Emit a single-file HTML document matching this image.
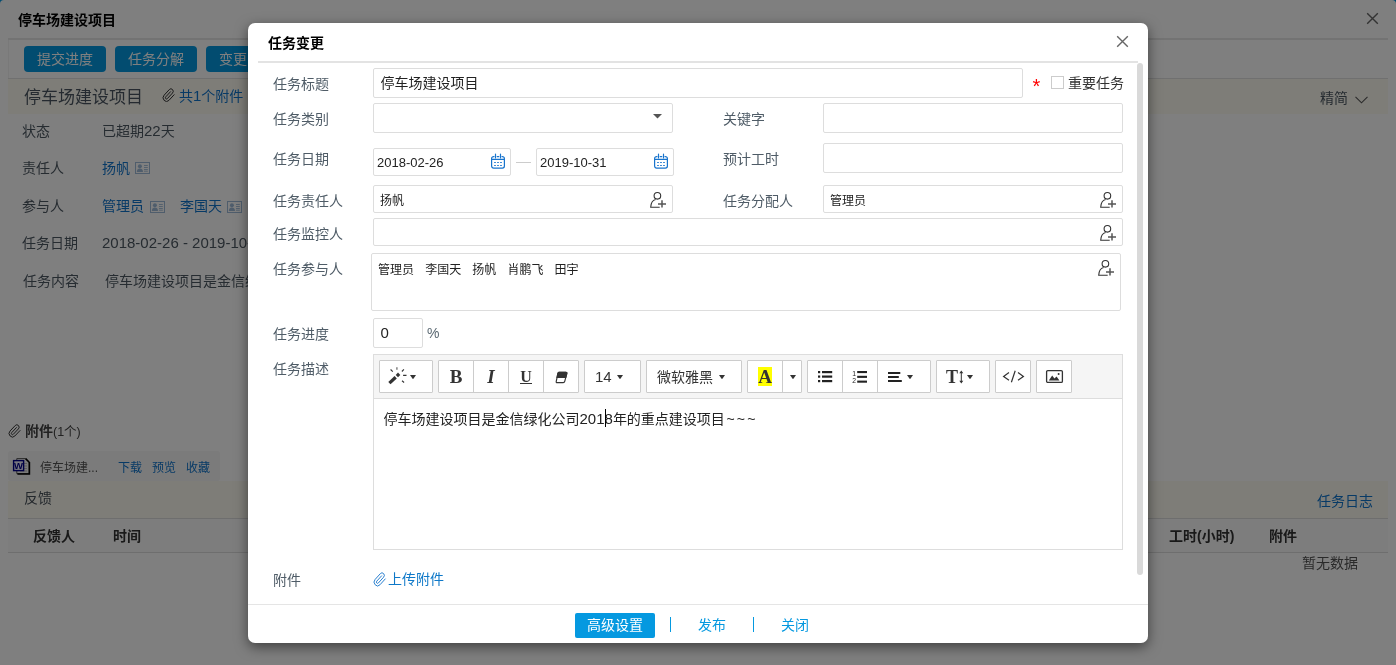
<!DOCTYPE html>
<html lang="zh-CN">
<head>
<meta charset="utf-8">
<title>任务变更</title>
<style>
*{box-sizing:border-box;margin:0;padding:0}
html,body{width:1396px;height:665px;overflow:hidden}
body{background:#0599e0;font-family:"Liberation Sans","Noto Sans CJK SC",sans-serif;font-size:14px;color:#333;position:relative}
.abs{position:absolute}
#page{will-change:transform;position:absolute;left:0;top:0;width:1396px;height:665px;background:#fff;border-radius:4px 4px 0 0;overflow:hidden}
#page .t{position:absolute;white-space:nowrap;line-height:20px}
.pbtn{position:absolute;top:46px;height:26px;width:82px;background:#0599e0;color:#fff;border-radius:4px;text-align:center;line-height:27px;font-size:14px}
.lnk{color:#0f74cc}
.lbl{color:#4d5862}
#mask{position:absolute;left:0;top:0;width:1396px;height:665px;background:rgba(0,0,0,.5)}
#dlg{will-change:transform;position:absolute;left:248px;top:23px;width:900px;height:620px;background:#fff;border-radius:7px;box-shadow:0 4px 13px rgba(0,0,0,.5)}
#dlg .t{position:absolute;white-space:nowrap;line-height:20px}
#dlg .fl{position:absolute;white-space:nowrap;line-height:20px;color:#4f5c67;font-size:14px;left:25px}
.inp{position:absolute;border:1px solid #ddd;border-radius:2px;background:#fff;height:30px}
.inp span{position:absolute;left:6.4px;top:4px;line-height:20px;white-space:nowrap;color:#222}
.tb{position:absolute;top:7px;height:32px;border:1px solid #ddd;background:#fff;border-radius:2px}
.tbb{position:absolute;top:337px;height:33px;border:1px solid #ccc;background:#fff;border-radius:1px}
.d{font-size:15px}
</style>
</head>
<body>
<div id="page">
  <div class="t" style="left:18px;top:10px;font-weight:bold;color:#000">停车场建设项目</div>
  <svg class="abs" style="left:1366px;top:12px" width="13" height="13" viewBox="0 0 13 13"><path d="M1.2 1.2L11.8 11.8M11.8 1.2L1.2 11.8" stroke="#666" stroke-width="1.4" fill="none"/></svg>
  <div class="abs" style="left:8px;top:38px;width:1380px;height:2px;background:#e6e6e6"></div>
  <div class="abs" style="left:8px;top:40px;width:1px;height:38px;background:#f2f2f2"></div>
  <div class="pbtn" style="left:24px">提交进度</div>
  <div class="pbtn" style="left:115px">任务分解</div>
  <div class="pbtn" style="left:206px;width:54px">变更</div>
  <div class="abs" style="left:8px;top:78px;width:1380px;height:1px;background:#e0e0e0"></div>
  <div class="abs" style="left:8px;top:79px;width:1380px;height:35px;background:#fcfaf1"></div>
  <div class="t" style="left:24px;top:85.5px;font-size:17px;line-height:24px;color:#4a5560">停车场建设项目</div>
  <div class="t lnk" style="left:179px;top:86px">共<span class="d">1</span>个附件</div>
  <div class="t lbl" style="left:1320px;top:88px">精简</div>

<svg class="abs" style="left:162.27px;top:87.55px" width="13.58" height="14.67" viewBox="0 0 24 24" preserveAspectRatio="none" fill="none" stroke="#333" stroke-width="1.0" vector-effect="non-scaling-stroke" stroke-linecap="round"><path vector-effect="non-scaling-stroke" d="M21.44 11.05l-9.19 9.19a6 6 0 0 1-8.49-8.49l9.19-9.19a4 4 0 0 1 5.66 5.66l-9.2 9.19a2 2 0 0 1-2.83-2.83l8.49-8.48"/></svg><svg class="abs" style="left:7.58px;top:423.68px" width="13.46" height="14.21" viewBox="0 0 24 24" preserveAspectRatio="none" fill="none" stroke="#333" stroke-width="1.0" vector-effect="non-scaling-stroke" stroke-linecap="round"><path vector-effect="non-scaling-stroke" d="M21.44 11.05l-9.19 9.19a6 6 0 0 1-8.49-8.49l9.19-9.19a4 4 0 0 1 5.66 5.66l-9.2 9.19a2 2 0 0 1-2.83-2.83l8.49-8.48"/></svg><svg class="abs" style="left:135px;top:162px" width="15" height="12" viewBox="0 0 15 12"><rect x=".5" y=".5" width="14" height="11" fill="none" stroke="#9fbbd8"/><circle cx="4.9" cy="4.2" r="2" fill="#9fbbd8"/><path d="M1.8 10C1.8 7.4 3.2 6.4 4.9 6.4S8 7.4 8 10Z" fill="#9fbbd8"/><path d="M9 3.5H12.8M9 5.5H12.8M9 7.5H12.8M9 9.2H12.8" stroke="#9fbbd8" stroke-width=".9"/></svg><svg class="abs" style="left:150px;top:201px" width="15" height="12" viewBox="0 0 15 12"><rect x=".5" y=".5" width="14" height="11" fill="none" stroke="#9fbbd8"/><circle cx="4.9" cy="4.2" r="2" fill="#9fbbd8"/><path d="M1.8 10C1.8 7.4 3.2 6.4 4.9 6.4S8 7.4 8 10Z" fill="#9fbbd8"/><path d="M9 3.5H12.8M9 5.5H12.8M9 7.5H12.8M9 9.2H12.8" stroke="#9fbbd8" stroke-width=".9"/></svg><svg class="abs" style="left:227px;top:201px" width="15" height="12" viewBox="0 0 15 12"><rect x=".5" y=".5" width="14" height="11" fill="none" stroke="#9fbbd8"/><circle cx="4.9" cy="4.2" r="2" fill="#9fbbd8"/><path d="M1.8 10C1.8 7.4 3.2 6.4 4.9 6.4S8 7.4 8 10Z" fill="#9fbbd8"/><path d="M9 3.5H12.8M9 5.5H12.8M9 7.5H12.8M9 9.2H12.8" stroke="#9fbbd8" stroke-width=".9"/></svg><svg class="abs" style="left:1355px;top:96px" width="13" height="8" viewBox="0 0 13 8"><path d="M.5 .8L6.5 6.8L12.5 .8" fill="none" stroke="#555" stroke-width="1.1"/></svg>
  <div class="t lbl" style="left:22px;top:121px">状态</div>
  <div class="t lbl" style="left:102px;top:121px">已超期<span class="d">22</span>天</div>
  <div class="t lbl" style="left:22px;top:158px">责任人</div>
  <div class="t lnk" style="left:102px;top:158px">扬帆</div>
  <div class="t lbl" style="left:22px;top:196px">参与人</div>
  <div class="t lnk" style="left:102px;top:196px">管理员</div>
  <div class="t lnk" style="left:180px;top:196px">李国天</div>
  <div class="t lbl" style="left:22px;top:233px">任务日期</div>
  <div class="t lbl" style="left:102px;top:233px;font-size:15px">2018-02-26 - 2019-10-31</div>
  <div class="t lbl" style="left:23px;top:271px">任务内容</div>
  <div class="t lbl" style="left:105px;top:271px">停车场建设项目是金信绿化公司<span class="d">2018</span>年的重点建设项目~~~</div>

  <div class="t" style="left:25px;top:421px;font-size:12.5px;color:#444"><b style="font-size:14px">附件</b>(1个)</div>
  <div class="abs" style="left:8px;top:451px;width:212px;height:30px;background:#f6f6f6;border-radius:3px"></div>
  <svg class="abs" style="left:12px;top:457px" width="20" height="20" viewBox="0 0 20 20"><path d="M4.8 1.6H13.6L17.2 5.2V16.6H4.8Z" fill="#f4f4f4" stroke="#555" stroke-width="1"/><path d="M13.6 1.6L17.2 5.2M17.4 5V17H5.4" fill="none" stroke="#000" stroke-width="1.6"/><path d="M12 6.5H15M12 9H15M12 11.5H15M8 14H15" stroke="#bbb" stroke-width="1" fill="none"/><rect x="1.6" y="3.6" width="10" height="10" fill="#f0f0ff" stroke="#00008b" stroke-width="1.4"/><text x="6.6" y="12" style="font-family:'Liberation Sans',sans-serif" font-size="9.5" font-weight="bold" fill="#00008b" text-anchor="middle">W</text></svg>
  <div class="t" style="left:40px;top:457.5px;font-size:12px;color:#555">停车场建...</div>
  <div class="t lnk" style="left:118px;top:457.5px;font-size:12px">下载</div>
  <div class="t lnk" style="left:152px;top:457.5px;font-size:12px">预览</div>
  <div class="t lnk" style="left:186px;top:457.5px;font-size:12px">收藏</div>
  <div class="abs" style="left:8px;top:481px;width:1380px;height:37px;background:#fcfaf1"></div>
  <div class="t" style="left:24px;top:488px;color:#475058">反馈</div>
  <div class="t lnk" style="left:1317px;top:491px">任务日志</div>
  <div class="abs" style="left:8px;top:518px;width:1380px;height:1px;background:#ddd"></div>
  <div class="abs" style="left:8px;top:519px;width:1380px;height:33px;background:#fafafa"></div>
  <div class="t" style="left:33px;top:526px;font-weight:bold;color:#333">反馈人</div>
  <div class="t" style="left:113px;top:526px;font-weight:bold;color:#333">时间</div>
  <div class="t" style="left:1169px;top:526px;font-weight:bold;color:#333">工时(小时)</div>
  <div class="t" style="left:1269px;top:526px;font-weight:bold;color:#333">附件</div>
  <div class="abs" style="left:8px;top:552px;width:1380px;height:1px;background:#ddd"></div>
  <div class="t" style="left:1302px;top:553px;color:#555">暂无数据</div>
</div>
<div id="mask"></div>

<div id="dlg">
  <div class="t" style="left:20px;top:10px;font-weight:bold;color:#000">任务变更</div>
  <svg class="abs" style="left:868px;top:12px" width="13" height="13" viewBox="0 0 13 13"><path d="M1.2 1.2L11.8 11.8M11.8 1.2L1.2 11.8" stroke="#666" stroke-width="1.4" fill="none"/></svg>
  <div class="abs" style="left:10px;top:38px;width:880px;height:2px;background:#e3e3e3"></div>
  <div class="abs" style="left:889px;top:40px;width:6px;height:512px;background:#d9d9d9;border-radius:3px"></div>

  <div class="fl" style="top:51px">任务标题</div>
  <div class="inp" style="left:125px;top:45px;width:650px"><span>停车场建设项目</span></div>
  <div class="t" style="left:784.5px;top:52.5px;color:#f00;font-size:20px">*</div>
  <div class="abs" style="left:803px;top:53px;width:13px;height:13px;border:1px solid #ccc;background:#fff"></div>
  <div class="t" style="left:820px;top:50px;color:#333">重要任务</div>

  <div class="fl" style="top:86px">任务类别</div>
  <div class="inp" style="left:125px;top:80px;width:300px"></div>
  <div class="fl" style="left:475px;top:86px">关键字</div>
  <div class="inp" style="left:575px;top:80px;width:300px"></div>

  <div class="fl" style="top:126px">任务日期</div>
  <div class="inp" style="left:125px;top:125px;width:138px;height:28px"><span style="left:3px;font-size:13px">2018-02-26</span></div>
  <div class="abs" style="left:268px;top:139px;width:15px;height:1px;background:#ccc"></div>
  <div class="inp" style="left:288px;top:125px;width:138px;height:28px"><span style="left:3px;font-size:13px">2019-10-31</span></div>
  <div class="fl" style="left:475px;top:126px">预计工时</div>
  <div class="inp" style="left:575px;top:120px;width:300px"></div>

  <div class="fl" style="top:168px">任务责任人</div>
  <div class="inp" style="left:125px;top:162px;width:300px;height:28px"><span style="left:6px;top:5px;font-size:12px">扬帆</span></div>
  <div class="fl" style="left:475px;top:168px">任务分配人</div>
  <div class="inp" style="left:575px;top:162px;width:300px;height:28px"><span style="left:6px;top:5px;font-size:12px">管理员</span></div>

  <div class="fl" style="top:201px">任务监控人</div>
  <div class="inp" style="left:125px;top:195px;width:750px;height:28px"></div>

  <div class="fl" style="top:236px">任务参与人</div>
  <div class="inp" style="left:123px;top:230px;width:750px;height:58px"><span style="left:6px;top:5.8px;font-size:12px;word-spacing:7.8px">管理员 李国天 扬帆 肖鹏飞 田宇</span></div>

  <div class="fl" style="top:301px">任务进度</div>
  <div class="inp" style="left:125px;top:295px;width:50px"><span style="font-size:15px">0</span></div>
  <div class="t" style="left:179px;top:300px;color:#5a6872">%</div>

  <div class="fl" style="top:336px">任务描述</div>
  <div class="abs" id="ed" style="left:125px;top:331px;width:750px;height:196px;border:1px solid #ddd;background:#fff">
    <div class="abs" style="left:0;top:0;width:748px;height:44px;background:#f5f5f5;border-bottom:1px solid #ddd"></div>
    <div class="t" style="left:9.5px;top:53.5px;color:#222">停车场建设项目是金信绿化公司<span class="d">2018</span>年的重点建设项目<span style="letter-spacing:2.2px;margin-left:1.5px">~~~</span></div>
  </div>

<svg class="abs" style="left:405px;top:91px" width="9" height="4.5" viewBox="0 0 9 4.5"><path d="M0 0H9L4.5 4.5Z" fill="#555"/></svg><svg class="abs" style="left:242px;top:130px" width="16" height="16" viewBox="0 0 16 16" fill="none" stroke="#1874cd" stroke-width="1.2" stroke-linecap="round"><path d="M4 3.6H3.6A2 2 0 0 0 1.6 5.6V13.1A2 2 0 0 0 3.6 15.1H12.4A2 2 0 0 0 14.4 13.1V5.6A2 2 0 0 0 12.4 3.6H12M7.2 3.6H8.8M1.6 6.4H14.4M5.5 1.2V4.8M10.5 1.2V4.8"/><path d="M4.2 9.5H5.8M7.2 9.5H8.8M10.2 9.5H11.8M4.2 12.5H5.8M7.2 12.5H8.8M10.2 12.5H11.8" stroke-linecap="butt"/></svg><svg class="abs" style="left:405px;top:130px" width="16" height="16" viewBox="0 0 16 16" fill="none" stroke="#1874cd" stroke-width="1.2" stroke-linecap="round"><path d="M4 3.6H3.6A2 2 0 0 0 1.6 5.6V13.1A2 2 0 0 0 3.6 15.1H12.4A2 2 0 0 0 14.4 13.1V5.6A2 2 0 0 0 12.4 3.6H12M7.2 3.6H8.8M1.6 6.4H14.4M5.5 1.2V4.8M10.5 1.2V4.8"/><path d="M4.2 9.5H5.8M7.2 9.5H8.8M10.2 9.5H11.8M4.2 12.5H5.8M7.2 12.5H8.8M10.2 12.5H11.8" stroke-linecap="butt"/></svg><svg class="abs" style="left:401px;top:168px" width="18" height="18" viewBox="0 0 18 18" fill="none"><circle cx="8.4" cy="4.8" r="3.3" stroke="#333" stroke-width="1.1"/><path d="M10.7 16.3H1.7C1.9 12 3.6 9.2 6.6 8.5" stroke="#333" stroke-width="1.1"/><path d="M9 13H17M13 9.3V16.6" stroke="#555" stroke-width="1.5"/></svg><svg class="abs" style="left:851px;top:168px" width="18" height="18" viewBox="0 0 18 18" fill="none"><circle cx="8.4" cy="4.8" r="3.3" stroke="#333" stroke-width="1.1"/><path d="M10.7 16.3H1.7C1.9 12 3.6 9.2 6.6 8.5" stroke="#333" stroke-width="1.1"/><path d="M9 13H17M13 9.3V16.6" stroke="#555" stroke-width="1.5"/></svg><svg class="abs" style="left:851px;top:201px" width="18" height="18" viewBox="0 0 18 18" fill="none"><circle cx="8.4" cy="4.8" r="3.3" stroke="#333" stroke-width="1.1"/><path d="M10.7 16.3H1.7C1.9 12 3.6 9.2 6.6 8.5" stroke="#333" stroke-width="1.1"/><path d="M9 13H17M13 9.3V16.6" stroke="#555" stroke-width="1.5"/></svg><svg class="abs" style="left:849px;top:236px" width="18" height="18" viewBox="0 0 18 18" fill="none"><circle cx="8.4" cy="4.8" r="3.3" stroke="#333" stroke-width="1.1"/><path d="M10.7 16.3H1.7C1.9 12 3.6 9.2 6.6 8.5" stroke="#333" stroke-width="1.1"/><path d="M9 13H17M13 9.3V16.6" stroke="#555" stroke-width="1.5"/></svg><svg class="abs" style="left:125.26px;top:548.52px" width="13.70" height="15.14" viewBox="0 0 24 24" preserveAspectRatio="none" fill="none" stroke="#2a80d0" stroke-width="1.0" vector-effect="non-scaling-stroke" stroke-linecap="round"><path vector-effect="non-scaling-stroke" d="M21.44 11.05l-9.19 9.19a6 6 0 0 1-8.49-8.49l9.19-9.19a4 4 0 0 1 5.66 5.66l-9.2 9.19a2 2 0 0 1-2.83-2.83l8.49-8.48"/></svg>
  <!-- editor toolbar -->
    <div class="tbb" style="left:131px;width:54px"></div>
    <div class="tbb" style="left:190px;width:141px"></div>
    <div class="tbb" style="left:336px;width:57px"></div>
    <div class="tbb" style="left:398px;width:96px"></div>
    <div class="tbb" style="left:499px;width:55px"></div>
    <div class="tbb" style="left:559px;width:124px"></div>
    <div class="tbb" style="left:688px;width:54px"></div>
    <div class="tbb" style="left:747px;width:36px"></div>
    <div class="tbb" style="left:788px;width:36px"></div>
    <div class="abs" style="left:225px;top:337px;width:1px;height:33px;background:#ccc"></div>
    <div class="abs" style="left:260px;top:337px;width:1px;height:33px;background:#ccc"></div>
    <div class="abs" style="left:295px;top:337px;width:1px;height:33px;background:#ccc"></div>
    <div class="abs" style="left:534px;top:337px;width:1px;height:33px;background:#ccc"></div>
    <div class="abs" style="left:594px;top:337px;width:1px;height:33px;background:#ccc"></div>
    <div class="abs" style="left:629px;top:337px;width:1px;height:33px;background:#ccc"></div>
    <svg class="abs" style="left:138px;top:343px" width="22" height="22" viewBox="0 0 22 22"><path d="M3.4 17.1L9.7 11.3" stroke="#333" stroke-width="3.3" fill="none"/><path d="M12 6.6L14.3 8.9L12 11.2L9.7 8.9Z" fill="#333"/><path d="M10.9 1.3V3.7" stroke="#777" stroke-width="1.4" fill="none"/><path d="M4.6 3.5L6.8 5.6M15.9 5.5L17.9 3.4M17.1 9.4H20.5M16 14.8L18.1 16.5" stroke="#333" stroke-width="1.1" fill="none"/></svg>
    <svg class="abs" style="left:161.7px;top:351.5px" width="6" height="4.3" viewBox="0 0 6 4.3"><path d="M0 0H6L3.0 4.3Z" fill="#333"/></svg>
    <svg class="abs" style="left:187.7px;top:336.3px;overflow:visible" width="40" height="30"><text x="20" y="24" text-anchor="middle" font-family="Liberation Serif,serif" font-size="19" fill="#333" font-weight="bold">B</text></svg>
    <svg class="abs" style="left:222.8px;top:336.3px;overflow:visible" width="40" height="30"><text x="20" y="24" text-anchor="middle" font-family="Liberation Serif,serif" font-size="19" fill="#333" font-weight="bold" font-style="italic">I</text></svg>
    <svg class="abs" style="left:258.0px;top:334.6px;overflow:visible" width="40" height="30"><text x="20" y="24" text-anchor="middle" font-family="Liberation Serif,serif" font-size="16" fill="#333" font-weight="bold">U</text></svg>
    <div class="abs" style="left:272px;top:360px;width:12px;height:1px;background:#333"></div>
    <svg class="abs" style="left:306.79999999999995px;top:347.8px" width="13.4" height="13.4" viewBox="0 0 15 15"><path d="M4.3 1.5H12.2Q13.6 1.5 13.2 2.9L10.9 11.6Q10.6 13 9.2 13H2.4Q1 13 1.4 11.6L3.2 2.9Q3.5 1.5 4.3 1.5Z" fill="#fff" stroke="#333" stroke-width="1.3"/><path d="M4.3 1.5H12.2Q13.6 1.5 13.2 2.9L12.1 7.2H2.3L3.2 2.9Q3.5 1.5 4.3 1.5Z" fill="#333" stroke="#333" stroke-width="1.3"/></svg>
    <div class="t" style="left:347px;top:343.5px;font-size:15px;color:#333">14</div>
    <svg class="abs" style="left:369.29999999999995px;top:351.6px" width="6" height="4.3" viewBox="0 0 6 4.3"><path d="M0 0H6L3.0 4.3Z" fill="#333"/></svg>
    <div class="t" style="left:409px;top:343.5px;font-size:14px;color:#333">微软雅黑</div>
    <svg class="abs" style="left:470.6px;top:351.5px" width="6" height="4.3" viewBox="0 0 6 4.3"><path d="M0 0H6L3.0 4.3Z" fill="#333"/></svg>
    <div class="abs" style="left:510px;top:344px;width:14px;height:19px;background:#ff0"></div>
    <svg class="abs" style="left:497.2px;top:335.8px;overflow:visible" width="40" height="30"><text x="20" y="24" text-anchor="middle" font-family="Liberation Serif,serif" font-size="19" fill="#333" font-weight="bold">A</text></svg>
    <svg class="abs" style="left:541.6px;top:351.5px" width="6" height="4.3" viewBox="0 0 6 4.3"><path d="M0 0H6L3.0 4.3Z" fill="#333"/></svg>
    <svg class="abs" style="left:569px;top:347px" width="16" height="13" viewBox="0 0 16 13" fill="#222"><rect x="1" y="1" width="2.2" height="2.2"/><rect x="5" y="1" width="10.2" height="2.2"/><rect x="1" y="5.5" width="2.2" height="2.2"/><rect x="5" y="5.5" width="10.2" height="2.2"/><rect x="1" y="10" width="2.2" height="2.2"/><rect x="5" y="10" width="10.2" height="2.2"/></svg>
    <svg class="abs" style="left:603px;top:346px" width="17" height="15" viewBox="0 0 17 15" fill="#222"><rect x="6.2" y="2" width="9.8" height="2.1"/><rect x="6.2" y="6.8" width="9.8" height="2.1"/><rect x="6.2" y="11.6" width="9.8" height="2.1"/><text x="1.2" y="6.6" style="font-family:'Liberation Sans',sans-serif" font-size="6.8">1</text><text x="1.2" y="13.8" style="font-family:'Liberation Sans',sans-serif" font-size="6.8">2</text></svg>
    <svg class="abs" style="left:639px;top:348px" width="16" height="12" viewBox="0 0 16 12" fill="#222"><rect x="1" y="1" width="12.3" height="2"/><rect x="1" y="5" width="10.8" height="2"/><rect x="1" y="9" width="13.8" height="2"/></svg>
    <svg class="abs" style="left:659.3px;top:351.6px" width="6" height="4.3" viewBox="0 0 6 4.3"><path d="M0 0H6L3.0 4.3Z" fill="#333"/></svg>
    <svg class="abs" style="left:683.6px;top:335.9px;overflow:visible" width="40" height="30"><text x="20" y="24" text-anchor="middle" font-family="Liberation Serif,serif" font-size="18" fill="#333" font-weight="bold">T</text></svg>
    <svg class="abs" style="left:710px;top:347px" width="7" height="14" viewBox="0 0 7 14"><path d="M3.3 2V12" stroke="#333" stroke-width="1" fill="none"/><path d="M3.3 .6L5.3 3.2H1.3ZM3.3 13.4L5.3 10.8H1.3Z" fill="#333"/></svg>
    <svg class="abs" style="left:719px;top:351.5px" width="6" height="4.3" viewBox="0 0 6 4.3"><path d="M0 0H6L3.0 4.3Z" fill="#333"/></svg>
    <svg class="abs" style="left:754px;top:347px" width="23" height="13" viewBox="0 0 23 13" fill="none" stroke="#333" stroke-width="1.2"><path d="M7 2.6L1.6 6.4L7 10.2M16 2.6L21.4 6.4L16 10.2M13.2 .8L9.4 12.2"/></svg>
    <svg class="abs" style="left:797px;top:346px" width="19" height="15" viewBox="0 0 19 15"><rect x="1.6" y="1.6" width="15.8" height="11.8" rx="1.2" fill="#fff" stroke="#333" stroke-width="1.3"/><path d="M3.8 11.4L7.2 6.6L9.4 9.4L11.6 7.6L14.4 11.4Z" fill="#333"/><circle cx="13.6" cy="5" r="1" fill="#333"/></svg>
  <div class="abs" style="left:357px;top:386px;width:1px;height:18px;background:#000"></div>
  <div class="fl" style="top:547px">附件</div>
  <div class="t" style="left:140px;top:546px;color:#0e78c8">上传附件</div>

  <div class="abs" style="left:0;top:581px;width:900px;height:1px;background:#e5e5e5"></div>
  <div class="abs" style="left:327px;top:590px;width:80px;height:25px;background:#0599e0;color:#fff;border-radius:2px;text-align:center;line-height:24px">高级设置</div>
  <div class="abs" style="left:422px;top:594px;width:1px;height:15px;background:#0599e0"></div>
  <div class="t" style="left:450px;top:592px;color:#0599e0">发布</div>
  <div class="abs" style="left:505px;top:594px;width:1px;height:15px;background:#0599e0"></div>
  <div class="t" style="left:533px;top:592px;color:#0599e0">关闭</div>
</div>
</body>
</html>
